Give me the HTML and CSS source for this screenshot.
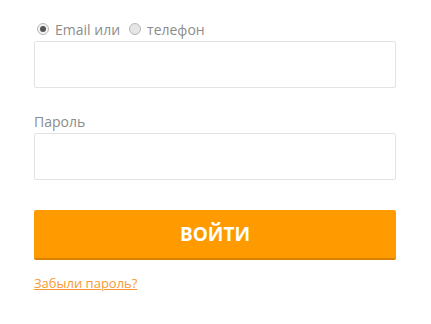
FILE: index.html
```html
<html>
<head>
	<title>Вход</title>
	<link rel="stylesheet" href="styles.css">
</head>
<body>
	<form class="login-form">
		<div class="login-type">
			<label class="radio"><span class="radio-dot checked"></span>Email или</label>
			<label class="radio"><span class="radio-dot"></span>телефон</label>
		</div>
		<input class="field" type="text">

		<div class="field-label">Пароль</div>
		<input class="field" type="password">

		<button class="submit-btn" type="button">ВОЙТИ</button>

		<a class="forgot-link" href="#">Забыли пароль?</a>
	</form>
</body>
</html>
```

FILE: styles.css
```css
body {
	margin: 0;
	background: #fff;
	font-family: "Open Sans", "Noto Sans", sans-serif;
}

.login-form {
	width: 362px;
	padding: 19px 0 0 34px;
	display: flex;
	flex-direction: column;
}

.login-type {
	display: flex;
	align-items: center;
	gap: 6px;
	height: 20px;
	font-size: 14px;
	color: #8c8c8c;
	margin-bottom: 2px;
}

.radio {
	display: flex;
	align-items: center;
}

.radio-dot {
	width: 10px;
	height: 10px;
	border: 1px solid #b8b8b8;
	border-radius: 50%;
	background: #e6e6e6;
	margin: 0 6px 0 3px;
	position: relative;
	box-sizing: content-box;
}

.radio-dot.checked {
	background: #f2f2f2;
}

.radio-dot.checked::after {
	content: "";
	position: absolute;
	left: 2px;
	top: 2px;
	width: 6px;
	height: 6px;
	border-radius: 50%;
	background: #555;
}

.field {
	display: block;
	width: 362px;
	height: 47px;
	box-sizing: border-box;
	border: 1px solid #e3e3e3;
	border-radius: 2px;
	background: #fff;
	outline: none;
}

.field-label {
	font-size: 14px;
	color: #8c8c8c;
	margin-top: 24px;
	height: 20px;
	margin-bottom: 1px;
}

.submit-btn {
	margin-top: 30px;
	height: 50px;
	width: 362px;
	border: none;
	border-bottom: 2px solid #d98200;
	border-radius: 2px;
	background: #ff9a00;
	color: #fff;
	font-family: inherit;
	font-size: 19px;
	font-weight: bold;
	cursor: pointer;
}

.forgot-link {
	margin-top: 14px;
	align-self: flex-start;
	font-size: 13px;
	color: #f79a33;
	text-decoration: underline;
}
```
